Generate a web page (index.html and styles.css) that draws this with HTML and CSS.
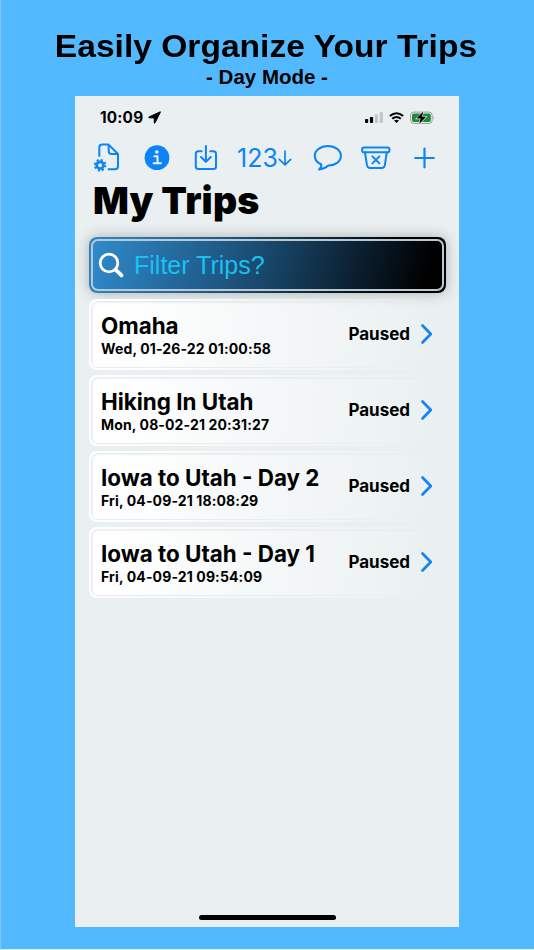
FILE: index.html
```html
<!DOCTYPE html>
<html lang="en">
<head>
    <meta charset="UTF-8">
    <title>My Trips</title>
    <link rel="stylesheet" href="styles.css">
</head>
<body>
    <div class="promo">
        <h1 class="promo_title"><span>Easily Organize Your Trips</span></h1>
        <p class="promo_sub">- Day Mode -</p>
        <div class="phone">
            <div class="status_bar">
                <span class="time">10:09</span>
                <svg class="location" width="13" height="13" viewBox="0 0 13 13" stroke="#000" stroke-width="0.9" stroke-linejoin="round"><path d="M12.2 0.8 L0.9 5.9 Q0.4 6.5 1.1 6.8 L6.2 6.9 L6.3 11.9 Q6.6 12.5 7 11.9 L12.4 1.2 Q12.6 0.7 12.2 0.8Z"/></svg>
                <svg class="signal" width="18" height="11" viewBox="0 0 18 11">
                    <rect x="0" y="7" width="3.2" height="4" rx="0.9"/>
                    <rect x="4.9" y="4.9" width="3.2" height="6.1" rx="0.9"/>
                    <rect x="9.8" y="2.3" width="3.2" height="8.7" rx="0.9" fill="#c3c6c7"/>
                    <rect x="14.7" y="0" width="3.2" height="11" rx="0.9" fill="#c3c6c7"/>
                </svg>
                <svg class="wifi" width="15" height="11" viewBox="0 0 15 11" fill="none" stroke="#000" stroke-width="2">
                    <path d="M0.8 4.1 Q7.5 -1.7 14.2 4.1"/>
                    <path d="M3.2 6.8 Q7.5 3.2 11.8 6.8"/>
                    <path d="M5 8.6 Q7.5 6.7 10 8.6 L7.5 11Z" fill="#000" stroke="none"/>
                </svg>
                <svg class="battery" width="25" height="14" viewBox="0 0 25 14">
                    <rect x="0.6" y="1.1" width="21.6" height="11.4" rx="3.2" fill="none" stroke="#9aa19e"/>
                    <path d="M23.3 5 Q24.8 6.8 23.3 8.6Z" fill="#9aa19e"/>
                    <rect x="2" y="2.6" width="18.8" height="8.4" rx="1.9" fill="#23893a"/>
                    <path d="M13.3 0.6 L6.5 7.6 H10.6 L9.2 13.1 L16.2 5.8 H12Z" stroke="#eaf0f1" stroke-width="1.2" paint-order="stroke"/>
                </svg>
            </div>
            <div class="toolbar">
                <svg class="i_file" width="28" height="30" viewBox="0 0 28 30">
                    <path d="M6.3 13.8 V4.5 Q6.3 1.6 9.2 1.6 H15.6 L25 11 V23 Q25 26.2 22 26.2 H14.8"/>
                    <path d="M15.7 1.9 V8 Q15.7 10.9 18.6 10.9 H24.7"/>
                    <circle cx="7.1" cy="22.2" r="3.4" stroke-width="2.8"/>
                    <circle cx="7.1" cy="22.2" r="5.3" stroke-width="2" stroke-dasharray="2.08 2.08"/>
                </svg>
                <svg class="i_info" width="26" height="30" viewBox="0 0 26 30">
                    <circle cx="13" cy="14.7" r="12.4" fill="#0d84f5" stroke="none"/>
                    <circle cx="12.8" cy="9" r="1.8" fill="#eaf0f1" stroke="none"/>
                    <path d="M10.3 13.2 H13.5 V20.1 M9.6 20.2 H17" stroke="#eaf0f1"/>
                </svg>
                <svg class="i_load" width="24" height="30" viewBox="0 0 24 30">
                    <path d="M7.6 8.3 H4.3 Q1.8 8.3 1.8 10.8 V23.5 Q1.8 26 4.3 26 H19.5 Q22 26 22 23.5 V10.8 Q22 8.3 19.5 8.3 H16.2"/>
                    <path d="M11.9 3 V18.6 M7 14 L11.9 18.9 L16.8 14"/>
                </svg>
                <div class="sort"><span>123</span><svg width="14" height="18" viewBox="0 0 14 18"><path d="M7 2 V15.6 M1.3 10.3 L7 15.8 L12.7 10.3" stroke-width="1.7"/></svg></div>
                <svg class="i_chat" width="30" height="30" viewBox="0 0 30 30">
                    <path d="M8.2 21.2 C4.2 19.6 1.8 16.7 1.8 12.9 C1.8 7.3 7.6 3.1 14.8 3.1 C22.1 3.1 27.9 7.3 27.9 12.9 C27.9 18.5 22.1 22.6 15.4 22.5 C13 24.6 9.8 26.3 6 26.4 C7.6 25 8.8 23 8.2 21.2Z"/>
                </svg>
                <svg class="i_bin" width="30" height="30" viewBox="0 0 30 30">
                    <rect x="1.2" y="4.5" width="27.2" height="4.7" rx="1.8"/>
                    <path d="M4 9.5 L6 22.4 Q6.5 25 9 25 H20.8 Q23.3 25 23.8 22.4 L25.8 9.5"/>
                    <path d="M11.4 13.4 L18.4 20.4 M18.4 13.4 L11.4 20.4"/>
                </svg>
                <svg class="i_add" width="21" height="30" viewBox="0 0 21 30"><path d="M10.5 5.7 V24.3 M1.2 15 H19.8" stroke-width="2.2"/></svg>
            </div>
            <h2 class="page_title">My Trips</h2>
            <div class="search">
                <div class="search_inner">
                    <svg width="27" height="27" viewBox="0 0 27 27" fill="none" stroke="#fff" stroke-linecap="round"><circle cx="11" cy="11" r="8.8" stroke-width="2.8"/><path d="M17.8 17.8 L23.5 23.4" stroke-width="3.8"/></svg>
                    <span>Filter Trips?</span>
                </div>
            </div>
            <div class="trips">
                <div class="trip">
                    <div class="trip_info">
                        <p class="name">Omaha</p>
                        <p class="date">Wed, 01-26-22 01:00:58</p>
                    </div>
                    <span class="state">Paused</span>
                    <svg class="chevron" width="14" height="22" viewBox="0 0 14 22"><path d="M2.5 2.5 L10.8 11 L2.5 19.5"/></svg>
                </div>
                <div class="trip">
                    <div class="trip_info">
                        <p class="name">Hiking In Utah</p>
                        <p class="date">Mon, 08-02-21 20:31:27</p>
                    </div>
                    <span class="state">Paused</span>
                    <svg class="chevron" width="14" height="22" viewBox="0 0 14 22"><path d="M2.5 2.5 L10.8 11 L2.5 19.5"/></svg>
                </div>
                <div class="trip">
                    <div class="trip_info">
                        <p class="name">Iowa to Utah - Day 2</p>
                        <p class="date">Fri, 04-09-21 18:08:29</p>
                    </div>
                    <span class="state">Paused</span>
                    <svg class="chevron" width="14" height="22" viewBox="0 0 14 22"><path d="M2.5 2.5 L10.8 11 L2.5 19.5"/></svg>
                </div>
                <div class="trip">
                    <div class="trip_info">
                        <p class="name">Iowa to Utah - Day 1</p>
                        <p class="date">Fri, 04-09-21 09:54:09</p>
                    </div>
                    <span class="state">Paused</span>
                    <svg class="chevron" width="14" height="22" viewBox="0 0 14 22"><path d="M2.5 2.5 L10.8 11 L2.5 19.5"/></svg>
                </div>
            </div>
            <div class="home_bar"></div>
        </div>
    </div>
</body>
</html>
```
FILE: styles.css
```css
*{
    box-sizing: border-box;
}
body{
    margin: 0;
}
h1,h2,p{
    margin: 0;
}
svg{
    display: block;
    flex: none;
}
.promo{
    width: 534px;
    height: 950px;
    padding-top: 28px;
    background: #53b9ff;
    border-bottom: 1px solid #d9effd;
    border-left: 1px solid #7ccaff;
    overflow: hidden;
    color: #000;
    font-family: "Liberation Sans", Arial, sans-serif;
}
.promo_title{
    height: 37px;
    padding-right: 3px;
    font-size: 31px;
    line-height: 37px;
    text-align: center;
    white-space: nowrap;
}
.promo_title span{
    display: inline-block;
    transform: scaleX(1.083);
}
.promo_sub{
    height: 31px;
    padding-right: 1px;
    font-size: 20.5px;
    line-height: 24px;
    font-weight: bold;
    text-align: center;
}
.phone{
    display: flex;
    flex-direction: column;
    width: 384px;
    height: 831px;
    margin-left: 74px;
    background: #eaf0f1;
    font-family: Inter, sans-serif;
}
.status_bar{
    display: flex;
    align-items: center;
    height: 43px;
    padding: 0 24px 0 25px;
}
.time{
    font-size: 15.3px;
    font-weight: 700;
    letter-spacing: .2px;
}
.location{
    margin-left: 5px;
}
.signal{
    margin-left: auto;
}
.wifi{
    margin-left: 6px;
}
.battery{
    margin-left: 6px;
}
.toolbar{
    display: flex;
    align-items: center;
    height: 36px;
    margin-top: 1px;
    padding-left: 18px;
}
.toolbar svg{
    fill: none;
    stroke: #0d84f5;
    stroke-width: 2;
    stroke-linecap: round;
    stroke-linejoin: round;
}
.toolbar .i_file{
    stroke-linecap: butt;
}
.i_info{
    margin-left: 23px;
}
.i_load{
    margin-left: 24px;
}
.sort{
    display: flex;
    align-items: center;
    width: 56px;
    margin-left: 19px;
    color: #0d84f5;
    font-size: 25px;
    line-height: 30px;
}
.i_chat{
    margin-left: 20px;
}
.i_bin{
    margin-left: 18px;
}
.i_add{
    margin-left: 23px;
}
.page_title{
    height: 61px;
    padding-left: 18px;
    font-size: 37.5px;
    line-height: 50px;
    font-weight: 900;
    letter-spacing: .2px;
}
.search{
    flex: none;
    width: 357px;
    height: 56px;
    margin-left: 14px;
    padding: 2px;
    border-radius: 8px;
    background: linear-gradient(100deg, #2f87c8, #235f8d 32%, #000 86%);
    box-shadow: 0 0 14px rgba(0,0,0,.28);
}
.search_inner{
    display: flex;
    align-items: center;
    height: 52px;
    padding-left: 5px;
    border: 2px solid #b9c9d3;
    border-radius: 7px;
    background: linear-gradient(105deg, #2f8acb, #1b4e75 45%, #000 95%) padding-box;
    color: #18c1f2;
    font-family: "Liberation Sans", Arial, sans-serif;
    font-size: 25px;
}
.search_inner span{
    margin-left: 9px;
}
.trips{
    display: grid;
    gap: 5px;
    margin: 6px 0 0 14px;
    width: 357px;
}
.trip{
    position: relative;
    display: flex;
    align-items: center;
    height: 71px;
    padding: 0 12px 2px 12px;
    border-radius: 8px;
    background: linear-gradient(95deg, #fff 8%, rgba(255,255,255,0) 95%);
}
/* thin inner frame, fades out to the right */
.trip::before{
    content: "";
    position: absolute;
    inset: 2px;
    border-radius: 6px;
    border: 1px solid #e6ecee;
    box-shadow: inset 1px 1px 1px rgba(190,205,208,.25);
    -webkit-mask: linear-gradient(90deg, #000 40%, rgba(0,0,0,.15));
    mask: linear-gradient(90deg, #000 40%, rgba(0,0,0,.15));
}
.trip_info{
    flex: 1;
    padding-top: 4px;
}
.name{
    font-size: 22.4px;
    line-height: 26px;
    font-weight: 650;
}
.date{
    font-size: 14px;
    line-height: 20px;
    font-weight: 700;
    letter-spacing: .13px;
}
.state{
    font-size: 17px;
    font-weight: 650;
}
.chevron{
    margin-left: 10px;
    fill: none;
    stroke: #1683ee;
    stroke-width: 2.7;
    stroke-linecap: round;
    stroke-linejoin: round;
}
.home_bar{
    width: 137px;
    height: 5px;
    margin: auto auto 7px;
    border-radius: 3px;
    background: #000;
}
```
